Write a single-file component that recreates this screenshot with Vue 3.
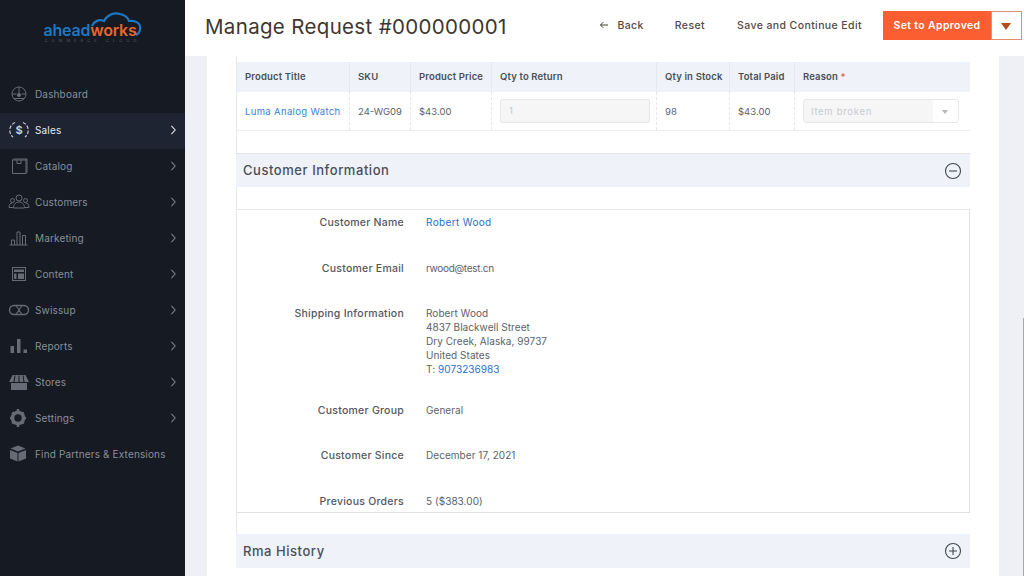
<script setup>
const menu = [
  { name: 'Dashboard', icon: 'dash' },
  { name: 'Sales', icon: 'sales', active: true, arrow: true },
  { name: 'Catalog', icon: 'catalog', arrow: true },
  { name: 'Customers', icon: 'customers', arrow: true },
  { name: 'Marketing', icon: 'marketing', arrow: true },
  { name: 'Content', icon: 'content', arrow: true },
  { name: 'Swissup', icon: 'swissup', arrow: true },
  { name: 'Reports', icon: 'reports', arrow: true },
  { name: 'Stores', icon: 'stores', arrow: true },
  { name: 'Settings', icon: 'settings', arrow: true },
  { name: 'Find Partners & Extensions', icon: 'partners' }
]
const columns = [
  { label: 'Product Title', width: 112 },
  { label: 'SKU', width: 61 },
  { label: 'Product Price', width: 81 },
  { label: 'Qty to Return', width: 165 },
  { label: 'Qty in Stock', width: 73 },
  { label: 'Total Paid', width: 65 },
  { label: 'Reason', width: 176, required: true }
]
</script>

<template>
  <div class="page">
    <aside class="sidebar">
      <div class="logo">
        <svg class="cloud" viewBox="0 0 100 30" width="100" height="30">
          <path d="M50 16 C52 11 57 9 62 11 C65 5 72 2 78 4 C83 5 86 8 87 11 C93 10 99 13 98 19 C98 22 96 24 94 25" fill="none" stroke="#1c77c3" stroke-width="2.2" />
        </svg>
        <div class="logo-word"><span class="ahead">ahead</span><span class="works">works</span></div>
        <div class="logo-sub">COMMERCE CLOUD</div>
      </div>
      <nav class="menu">
        <div v-for="m in menu" :key="m.name" class="item" :class="{ active: m.active }">
          <svg class="micon" viewBox="0 0 22 22" width="22" height="22">
            <g v-if="m.icon === 'dash'" fill="none" stroke="currentColor" stroke-width="1">
              <circle cx="11" cy="11" r="7" />
              <path d="M4 11h4.500M13.500 11H18M11 4v6" />
              <circle cx="11" cy="12" r="1.600" fill="currentColor" />
              <path d="M6 15.500h10" />
            </g>
            <g v-else-if="m.icon === 'sales'" fill="none" stroke="currentColor" stroke-width="1.200">
              <path d="M7 3.500A8.500 8.500 0 0 0 5 18M15 3.500A8.500 8.500 0 0 1 17 18" stroke-dasharray="3.500 1.500" />
              <text x="11" y="15" text-anchor="middle" class="dollar" fill="currentColor" stroke="none">$</text>
            </g>
            <g v-else-if="m.icon === 'catalog'" fill="none" stroke="currentColor" stroke-width="1">
              <path d="M4.500 5h13.500v13.500H4.500zM18 5l1-1v13l-1 1.500M4.500 5l1-1H19M9 5v3.500h4V5" />
            </g>
            <g v-else-if="m.icon === 'customers'" fill="none" stroke="currentColor" stroke-width="1">
              <circle cx="11" cy="7" r="3" />
              <circle cx="4.500" cy="9.500" r="2" />
              <circle cx="17.500" cy="9.500" r="2" />
              <path d="M5.500 17c0-4 2.500-6 5.500-6s5.500 2 5.500 6zM5.500 16.500H1c0-3 1-4.500 3.500-4.500M16.500 16.500H21c0-3-1-4.500-3.500-4.500" />
            </g>
            <g v-else-if="m.icon === 'marketing'" fill="none" stroke="currentColor" stroke-width="1">
              <path d="M1.500 18h18M3.500 18v-5h3v5M9 18V5h3v13M14.500 18V8.500h3V18" />
            </g>
            <g v-else-if="m.icon === 'content'" fill="currentColor">
              <path d="M4 4h14v14H4zm1 1v12h12V5z" fill-rule="evenodd" />
              <path d="M6 6.500h10V9H6zM6 10.500h2.500V16H6zM10 10.500h6V16h-6z" />
            </g>
            <g v-else-if="m.icon === 'swissup'" fill="none" stroke="currentColor" stroke-width="1.400">
              <rect x="1.500" y="6.500" width="19" height="9" rx="4.500" />
              <path d="M8 14.500c2.500 0 3.500-7 6-7M8 7.500c2.500 0 3.500 7 6 7" stroke-width="1.100" />
            </g>
            <g v-else-if="m.icon === 'reports'" fill="currentColor">
              <path d="M2.500 11h3.500v7H2.500zM9 4h3.500v14H9zM15.500 14.500H19V18h-3.500z" />
            </g>
            <g v-else-if="m.icon === 'stores'" fill="currentColor">
              <path d="M4.500 4h13L21 11H1zM3 12h16v7H3z" />
              <path d="M7 4.500L6 11M11 4.500V11M15 4.500l1 6.500" stroke="#151a23" stroke-width="1" />
            </g>
            <g v-else-if="m.icon === 'settings'">
              <circle cx="10" cy="11" r="5.500" fill="none" stroke="currentColor" stroke-width="3.600" />
              <path d="M10 2v3M10 17v3M2 11h3M15 11h3M4.300 5.300l2 2M13.700 14.700l2 2M15.700 5.300l-2 2M6.300 14.700l-2 2" stroke="currentColor" stroke-width="2.600" />
            </g>
            <g v-else fill="currentColor">
              <path d="M10 2.500l7.500 3-7.500 3-7.500-3zM2 7l7.500 3v8.500l-7.500-3zM18 7l-7.500 3v8.500l7.500-3z" />
            </g>
          </svg>
          <span class="mlabel">{{ m.name }}</span>
          <svg v-if="m.arrow" class="chev" viewBox="0 0 8 12" width="7" height="10">
            <path d="M1.500 1l4.500 5-4.500 5" fill="none" stroke="currentColor" stroke-width="1.300" />
          </svg>
        </div>
      </nav>
    </aside>

    <div class="main">
      <header class="topbar">
        <h1 class="title">Manage Request #000000001</h1>
        <div class="actions">
          <span class="link back">
            <svg viewBox="0 0 12 10" width="10" height="8">
              <path d="M11 5H2M5 1.500L1.500 5 5 8.500" fill="none" stroke="#41362f" stroke-width="1.200" />
            </svg>
            Back
          </span>
          <span class="link reset">Reset</span>
          <span class="link save">Save and Continue Edit</span>
          <div class="split">
            <span class="primary">Set to Approved</span>
            <span class="caret"></span>
          </div>
        </div>
      </header>

      <div class="content">
        <div class="card">
          <section class="panel">
            <div class="table-wrap">
              <div class="thead">
                <div v-for="c in columns" :key="c.label" class="th" :style="{ width: c.width + 'px' }">
                  {{ c.label }}<span v-if="c.required" class="req"> *</span>
                </div>
              </div>
              <div class="tbody">
                <div class="td blue product" :style="{ width: columns[0].width + 'px' }">Luma Analog Watch</div>
                <div class="td" :style="{ width: columns[1].width + 'px' }">24-WG09</div>
                <div class="td" :style="{ width: columns[2].width + 'px' }">$43.00</div>
                <div class="td" :style="{ width: columns[3].width + 'px' }"><div class="qty">1</div></div>
                <div class="td stock" :style="{ width: columns[4].width + 'px' }">98</div>
                <div class="td" :style="{ width: columns[5].width + 'px' }">$43.00</div>
                <div class="td" :style="{ width: columns[6].width + 'px' }">
                  <div class="select"><span class="sel-text">Item broken</span><span class="sel-arrow"></span></div>
                </div>
              </div>
            </div>

            <div class="section-head head-info">
              <span class="head-text">Customer Information</span>
              <svg viewBox="0 0 18 18" width="18" height="18">
                <circle cx="9" cy="9" r="7.500" fill="none" stroke="#41474f" stroke-width="1.100" />
                <path d="M5 9h8" stroke="#41474f" stroke-width="1.100" />
              </svg>
            </div>

            <div class="info">
              <div class="row r1"><div class="k">Customer Name</div><div class="v blue wide">Robert Wood</div></div>
              <div class="row r2"><div class="k">Customer Email</div><div class="v email">rwood@test.cn</div></div>
              <div class="row r3">
                <div class="k">Shipping Information</div>
                <div class="v">
                  <div>Robert Wood</div>
                  <div>4837 Blackwell Street</div>
                  <div>Dry Creek, Alaska, 99737</div>
                  <div>United States</div>
                  <div>T: <span class="blue">9073236983</span></div>
                </div>
              </div>
              <div class="row r4"><div class="k">Customer Group</div><div class="v">General</div></div>
              <div class="row r5"><div class="k">Customer Since</div><div class="v">December 17, 2021</div></div>
              <div class="row r6"><div class="k">Previous Orders</div><div class="v">5 ($383.00)</div></div>
            </div>

            <div class="section-head head-rma">
              <span class="head-text rma-text">Rma History</span>
              <svg viewBox="0 0 18 18" width="18" height="18">
                <circle cx="9" cy="9" r="7.500" fill="none" stroke="#41474f" stroke-width="1.100" />
                <path d="M5 9h8M9 5v8" stroke="#41474f" stroke-width="1.100" />
              </svg>
            </div>
          </section>
        </div>
      </div>
    </div>
    <div class="scroll-thumb"></div>
  </div>
</template>

<style>
html, body { margin: 0; padding: 0; overflow: hidden; }
</style>

<style scoped>
.page {
  position: relative;
  display: flex;
  width: 1024px;
  height: 576px;
  overflow: hidden;
  font-family: Inter, "Noto Sans", sans-serif;
  background: #eef0f6;
  color: #4a4f57;
}
.scroll-thumb {
  position: absolute;
  right: 0;
  top: 318px;
  bottom: 0;
  width: 1px;
  background: #a9a9ad;
}
.sidebar {
  width: 185px;
  flex: none;
  background: #151a23;
}
.logo {
  position: relative;
  height: 77px;
  padding-top: 22px;
  box-sizing: border-box;
  text-align: center;
}
.cloud { position: absolute; left: 42px; top: 10px; }
.logo-word {
  position: relative;
  font-size: 16px;
  line-height: 17px;
  font-weight: 600;
  letter-spacing: -0.2px;
  padding-right: 5px;
}
.ahead { color: #1f78c1; }
.works { color: #e8662b; }
.logo-sub {
  font-size: 4px;
  line-height: 6px;
  letter-spacing: 4.1px;
  color: #565c68;
  margin-top: -1px;
}
.menu { display: flex; flex-direction: column; }
.item {
  display: flex;
  align-items: center;
  height: 36px;
  color: #8a8f99;
  font-size: 10px;
  padding: 0 7px 2px 8px;
  box-sizing: border-box;
}
.item.active { background: #1e2431; color: #e6e8ec; }
.micon { flex: none; margin-right: 5px; color: #666b75; }
.active .micon { color: #c9ccd2; }
.mlabel { flex: 1; white-space: nowrap; letter-spacing: 0.15px; }
.chev { flex: none; color: #7a7f89; margin-right: 1px; }
.active .chev { color: #e6e8ec; }
.dollar { font-size: 11px; font-weight: 700; font-family: Inter, sans-serif; }

.main { flex: 1; min-width: 0; display: flex; flex-direction: column; }
.topbar {
  height: 56px;
  flex: none;
  background: #fff;
  display: flex;
  align-items: center;
  justify-content: space-between;
  padding: 0 2px 0 20px;
}
.title {
  margin: 0;
  font-size: 20.500px;
  font-weight: 400;
  letter-spacing: 0.33px;
  color: #41362f;
  white-space: nowrap;
  position: relative;
  top: -2px;
}
.actions { display: flex; align-items: center; position: relative; top: -3px; }
.link {
  font-size: 10.500px;
  font-weight: 500;
  letter-spacing: 0.4px;
  color: #514a45;
  white-space: nowrap;
}
.back { display: flex; align-items: center; gap: 8px; }
.reset { margin-left: 31px; }
.save { margin-left: 32px; }
.split { display: flex; height: 29px; margin-left: 21px; }
.primary {
  width: 108px;
  background: #fb5f31;
  color: #fff;
  font-size: 10.500px;
  font-weight: 600;
  letter-spacing: 0.35px;
  display: flex;
  align-items: center;
  justify-content: center;
  white-space: nowrap;
}
.caret {
  width: 31px;
  box-sizing: border-box;
  border: 1px solid #e08d70;
  background: #fff;
  position: relative;
}
.caret::after {
  content: "";
  position: absolute;
  left: 9px;
  top: 11px;
  border-left: 5px solid transparent;
  border-right: 5px solid transparent;
  border-top: 7px solid #b5471a;
}
.content { flex: 1; min-height: 0; padding-left: 22px; }
.card {
  width: 792px;
  height: 100%;
  background: #fff;
  padding-left: 29px;
  box-sizing: border-box;
}
.panel {
  width: 734px;
  box-sizing: border-box;
  border-left: 1px solid #e6e8ec;
  padding-top: 6px;
}
.thead { display: flex; height: 30px; background: #eff2f8; }
.th {
  box-sizing: border-box;
  padding: 0 8px;
  font-size: 9.500px;
  font-weight: 600;
  letter-spacing: 0.15px;
  line-height: 29px;
  color: #4a4f57;
  white-space: nowrap;
  border-left: 1px solid #e6e9f0;
}
.th:first-child { border-left: 0; }
.req { color: #e85a4f; }
.tbody {
  display: flex;
  height: 39px;
  border-bottom: 1px solid #eceef2;
  box-sizing: border-box;
}
.td {
  box-sizing: border-box;
  padding: 0 8px;
  font-size: 9.500px;
  color: #5d6169;
  display: flex;
  align-items: center;
  white-space: nowrap;
  border-left: 1px dashed #e4e8f0;
}
.td:first-child { border-left: 0; }
.blue { color: #2a6fc9; }
.td.blue { color: #3a7fd5; }
.product { letter-spacing: 0.35px; }
.stock { color: #5d6780; }
.qty {
  width: 150px;
  height: 24px;
  flex: none;
  box-sizing: border-box;
  background: #f6f6f7;
  border: 1px solid #e6e7ea;
  border-radius: 2px;
  padding-left: 8px;
  line-height: 22px;
  color: #c4c6ca;
  font-size: 9.500px;
}
.select {
  width: 156px;
  height: 24px;
  flex: none;
  box-sizing: border-box;
  background: #f6f6f7;
  border: 1px solid #e6e7ea;
  border-radius: 3px;
  display: flex;
  align-items: center;
  overflow: hidden;
}
.sel-text { flex: 1; padding-left: 7px; font-size: 9.500px; color: #c9cbcf; letter-spacing: 0.7px; }
.sel-arrow { width: 25px; height: 100%; background: #fff; position: relative; }
.sel-arrow::after {
  content: "";
  position: absolute;
  left: 9px;
  top: 10px;
  border-left: 3px solid transparent;
  border-right: 3px solid transparent;
  border-top: 4px solid #b5b7bb;
}
.section-head {
  height: 34px;
  box-sizing: border-box;
  background: #eff2f8;
  display: flex;
  align-items: center;
  justify-content: space-between;
  margin-left: -1px;
  padding: 0 8px 0 7px;
  font-size: 13px;
  font-weight: 500;
  letter-spacing: 0.55px;
  color: #4a4f57;
}
.head-text { position: relative; top: -1px; }
.rma-text { top: 0; }
.head-info { margin-top: 22px; border-top: 1px solid #e3e5e9; }
.head-rma { margin-top: 21px; }
.info {
  margin-top: 22px;
  height: 304px;
  box-sizing: border-box;
  border-top: 1px solid #e6e8ec;
  border-right: 1px solid #dfe1e5;
  border-bottom: 1px solid #dfe1e5;
  overflow: hidden;
  padding-top: 5px;
}
.row { display: flex; font-size: 10px; line-height: 14px; }
.k {
  width: 167px;
  padding-top: 1px;
  text-align: right;
  color: #53575e;
  font-size: 10.500px;
  letter-spacing: 0.25px;
  font-weight: 500;
  white-space: nowrap;
  flex: none;
}
.v { margin-left: 22px; color: #5d6169; white-space: nowrap; letter-spacing: 0.05px; }
.v.blue { color: #2a6fc9; }
.wide { letter-spacing: 0.35px; }
.email { letter-spacing: -0.3px; }
.r2 { margin-top: 31px; }
.r3 { margin-top: 30px; }
.r4 { margin-top: 27px; }
.r5 { margin-top: 30px; }
.r6 { margin-top: 31px; }
</style>
